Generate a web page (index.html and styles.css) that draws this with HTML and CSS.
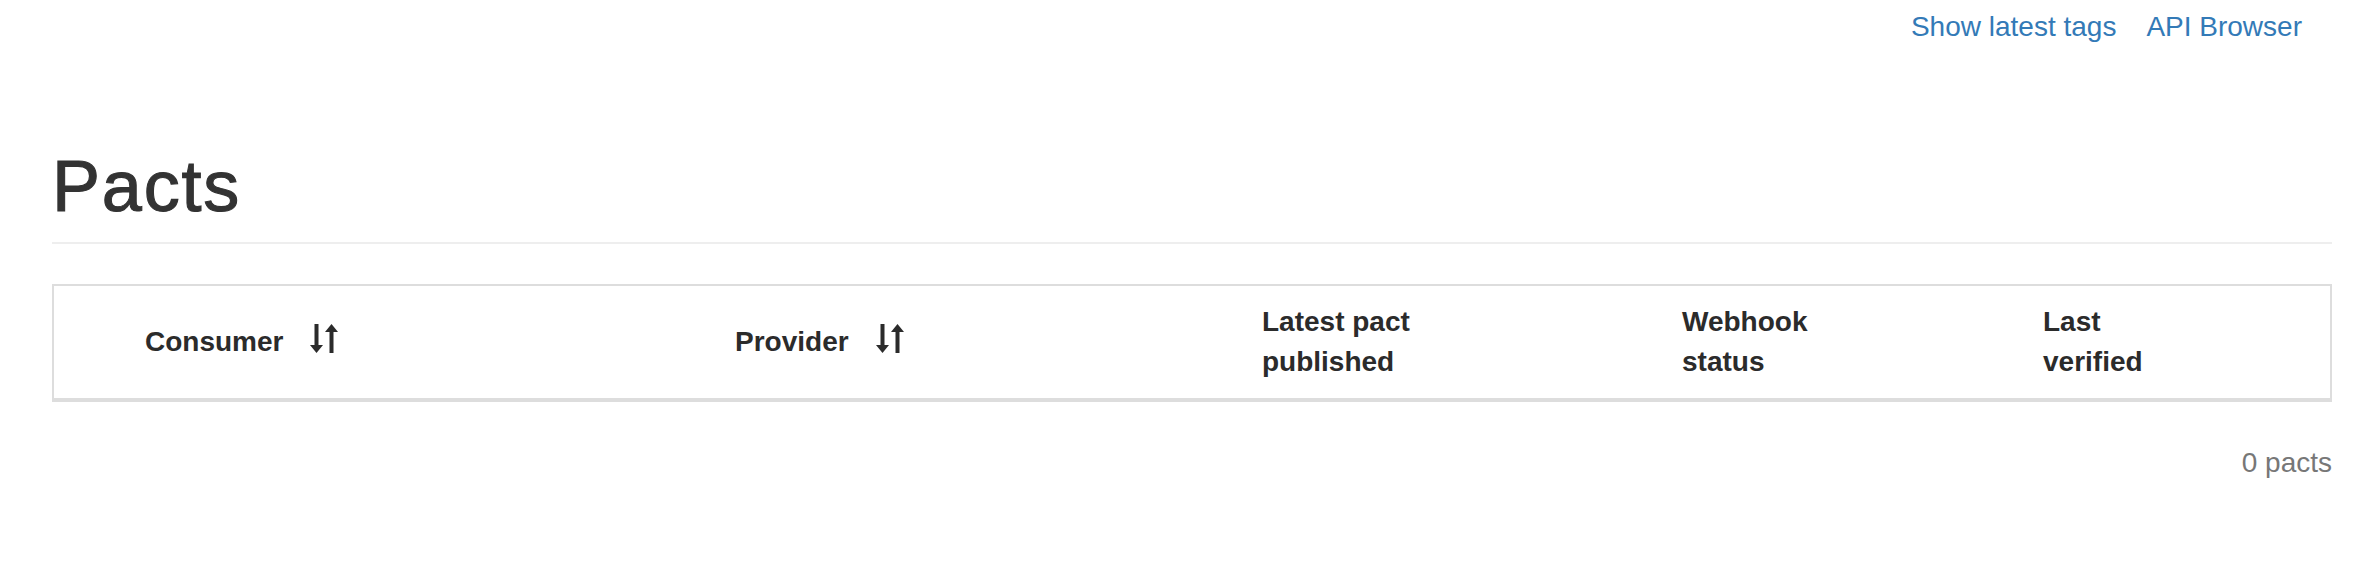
FILE: index.html
```html
<!DOCTYPE html>
<html lang="en">
<head>
<meta charset="utf-8">
<title>Pacts</title>
<link rel="stylesheet" href="styles.css">
</head>
<body>
<div class="page">
  <nav class="top-nav">
    <a href="#" class="nav-link">Show latest tags</a>
    <a href="#" class="nav-link">API Browser</a>
  </nav>
  <div class="page-header">
    <h1 class="title">Pacts</h1>
  </div>
  <table class="pacts">
    <thead>
      <tr>
        <th class="col-blank"></th>
        <th class="col-consumer">Consumer<svg class="sort-icon" viewBox="0 0 28 29" width="28" height="29"><rect x="4.5" y="0" width="4" height="22"/><polygon points="0,21 13,21 6.5,29"/><rect x="19.5" y="7" width="4" height="22"/><polygon points="15,8 28,8 21.5,0"/></svg></th>
        <th class="col-provider">Provider<svg class="sort-icon" viewBox="0 0 28 29" width="28" height="29"><rect x="4.5" y="0" width="4" height="22"/><polygon points="0,21 13,21 6.5,29"/><rect x="19.5" y="7" width="4" height="22"/><polygon points="15,8 28,8 21.5,0"/></svg></th>
        <th class="col-published">Latest pact<br>published</th>
        <th class="col-webhook">Webhook<br>status</th>
        <th class="col-verified">Last<br>verified</th>
      </tr>
    </thead>
  </table>
  <div class="table-info">0 pacts</div>
</div>
</body>
</html>
```
FILE: styles.css
```css
* {
  box-sizing: border-box;
}

body {
  margin: 0;
  background: #fff;
  color: #333;
  font-family: "Liberation Sans", Arial, Helvetica, sans-serif;
  font-size: 28px;
  line-height: 40px;
}

.page {
  padding: 0 34px 0 52px;
}

.top-nav {
  display: flex;
  justify-content: flex-end;
  gap: 30px;
  padding: 7px 30px 0 0;
  height: 47px;
}

.nav-link {
  color: #337ab7;
  text-decoration: none;
}

.page-header {
  margin-top: 100px;
  padding-bottom: 16px;
  border-bottom: 2px solid #eee;
}

.title {
  margin: 0;
  font-size: 72px;
  line-height: 79px;
  font-weight: 500;
  letter-spacing: 1.8px;
  -webkit-text-stroke: 1.1px #333;
  color: #333;
}

.pacts {
  width: 100%;
  margin-top: 40px;
  table-layout: fixed;
  border-collapse: separate;
  border-spacing: 0;
  border: 2px solid #ddd;
}

.pacts th {
  padding: 16px;
  text-align: left;
  vertical-align: middle;
  font-weight: bold;
  color: #2b2b2b;
  border-bottom: 2px solid #ddd;
  white-space: nowrap;
}

.col-blank { width: 75px; }
.col-consumer { width: 590px; }
.col-provider { width: 527px; }
.col-published { width: 420px; }
.col-webhook { width: 361px; }
.col-verified { width: auto; }

.sort-icon {
  margin-left: 27px;
  vertical-align: -2px;
  fill: #2b2b2b;
}

.table-info {
  margin-top: 41px;
  text-align: right;
  color: #777;
}
```
